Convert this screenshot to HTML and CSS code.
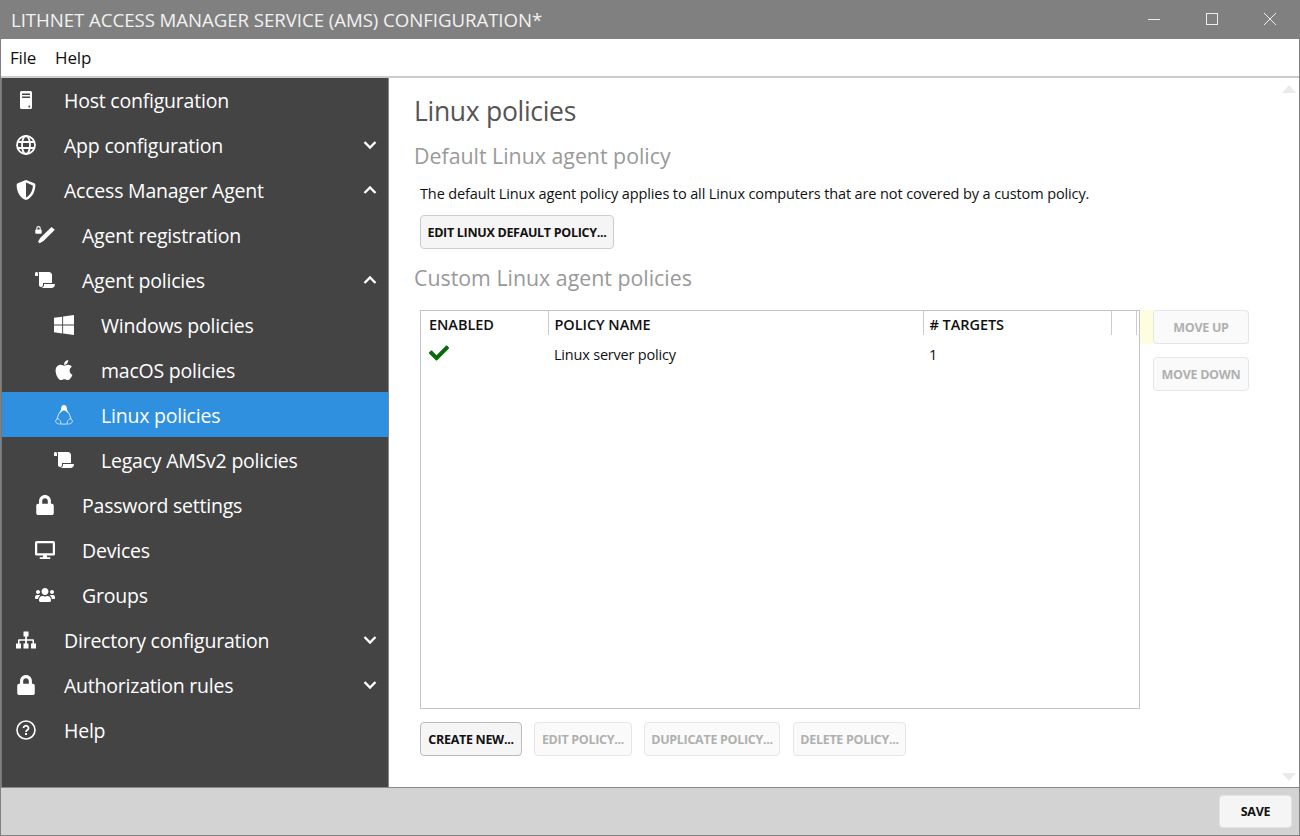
FILE: index.html
```html
<!DOCTYPE html>
<html lang="en">
<head>
    <meta charset="UTF-8">
    <title>Lithnet Access Manager Service (AMS) Configuration</title>
    <link rel="stylesheet" href="styles.css">
</head>
<body>
<div class="window">
    <div class="titlebar">
        <span class="title">LITHNET ACCESS MANAGER SERVICE (AMS) CONFIGURATION*</span>
        <div class="winbtns">
            <svg width="12" height="12" viewBox="0 0 12 12"><path d="M0 6.5h12" stroke="#eee" fill="none"/></svg>
            <svg width="12" height="12" viewBox="0 0 12 12"><rect x=".5" y=".5" width="11" height="11" stroke="#eee" fill="none"/></svg>
            <svg width="12" height="12" viewBox="0 0 12 12"><path d="M0 0l12 12M12 0L0 12" stroke="#eee" fill="none"/></svg>
        </div>
    </div>
    <div class="menubar">
        <span>File</span>
        <span>Help</span>
    </div>
    <div class="content">
        <nav class="sidebar">
            <div class="navitem">
                <svg class="icon" viewBox="0 0 20 20"><path fill="#fff" fill-rule="evenodd" d="M5.500 1h9a1.500 1.500 0 0 1 1.500 1.500v15a1.500 1.500 0 0 1-1.500 1.500h-9A1.500 1.500 0 0 1 4 17.500v-15A1.500 1.500 0 0 1 5.500 1zM6 3.500v1.500h8V3.500zm0 3v1.500h8V6.500zm6.500 9v2H14v-2z"/></svg>
                <span>Host configuration</span>
            </div>
            <div class="navitem">
                <svg class="icon" viewBox="0 0 20 20"><g fill="none" stroke="#fff" stroke-width="1.800"><circle cx="10" cy="10" r="9"/><ellipse cx="10" cy="10" rx="4" ry="9"/><path d="M1.500 7h17M1.500 13h17"/></g></svg>
                <span>App configuration</span>
                <svg class="chev" viewBox="0 0 14 10"><path d="M1.500 2l5.500 5.500L12.500 2"/></svg>
            </div>
            <div class="navitem">
                <svg class="icon" viewBox="0 0 512 512"><path fill="#fff" d="M466.500 83.700l-192-80a48.150 48.150 0 0 0-36.900 0l-192 80C27.700 91.100 16 108.600 16 128c0 198.500 114.500 335.700 221.500 380.300 11.800 4.900 25.100 4.900 36.900 0C360.100 472.600 496 349.300 496 128c0-19.400-11.700-36.900-29.500-44.300zM256.100 446.300l-.1-381 175.900 73.300c-3.300 151.400-82.100 261.100-175.800 307.700z"/></svg>
                <span>Access Manager Agent</span>
                <svg class="chev" viewBox="0 0 14 10"><path d="M1.500 8L7 2.500 12.500 8"/></svg>
            </div>
            <div class="navitem lvl2">
                <svg class="icon" viewBox="0 0 20 20"><path fill="#fff" d="M16.500 2l3.300 2.800L8.500 16l-4 2.300-1.500-1.500L5.200 13z"/><rect x=".3" y="4.500" width="6.400" height="4.300" rx=".8" fill="#fff"/><path d="M1.800 4.800V3.300a1.700 1.700 0 0 1 3.400 0v1.500" fill="none" stroke="#fff" stroke-width="1.100"/></svg>
                <span>Agent registration</span>
            </div>
            <div class="navitem lvl2">
                <svg class="icon" viewBox="0 0 640 512"><path fill="#fff" d="M48 0C21.530 0 0 21.530 0 48v64c0 8.840 7.160 16 16 16h80V48C96 21.530 74.470 0 48 0zm208 412.570V352h288V96c0-52.940-43.060-96-96-96H111.590C121.740 13.410 128 29.920 128 48v368c0 38.870 34.660 69.650 74.770 63.120C234.270 474 256 444.460 256 412.570zM288 384v32c0 52.930-43.060 96-96 96h336c61.860 0 112-50.140 112-112 0-8.840-7.160-16-16-16H288z"/></svg>
                <span>Agent policies</span>
                <svg class="chev" viewBox="0 0 14 10"><path d="M1.500 8L7 2.500 12.500 8"/></svg>
            </div>
            <div class="navitem lvl3">
                <svg class="icon" viewBox="0 32 448 448"><path fill="#fff" d="M0 93.700l183.600-25.300v177.400H0V93.700zm0 324.600l183.600 25.300V268.400H0v149.900zm203.800 28L448 480V268.400H203.800v177.900zm0-380.600v180.100H448V32L203.800 65.700z"/></svg>
                <span>Windows policies</span>
            </div>
            <div class="navitem lvl3">
                <svg class="icon" viewBox="0 32 384 448"><path fill="#fff" d="M318.700 268.700c-.2-36.700 16.400-64.400 50-84.800-18.800-26.900-47.200-41.700-84.700-44.600-35.500-2.800-74.300 20.700-88.500 20.700-15 0-49.400-19.700-76.400-19.700C63.300 141.200 4 184.800 4 273.500q0 39.300 14.400 81.200c12.800 36.700 59 126.700 107.200 125.200 25.200-.6 43-17.900 75.800-17.900 31.800 0 48.300 17.900 76.400 17.900 48.600-.7 90.400-82.500 102.600-119.300-65.200-30.700-61.700-90-61.700-91.900zm-56.600-164.200c27.300-32.400 24.800-61.900 24-72.500-24.100 1.400-52 16.400-67.900 34.900-17.500 19.800-27.800 44.300-25.600 71.900 26.100 2 49.900-11.400 69.500-34.300z"/></svg>
                <span>macOS policies</span>
            </div>
            <div class="navitem lvl3 selected">
                <svg class="icon" viewBox="0 0 20 20"><path fill="#fff" d="M10 0c1.900 0 2.800 1.400 2.800 3.200 0 1.500.8 2.700 1.800 4.300l-1 .4C12.500 6.500 11.700 5.500 10 5.500S7.500 6.500 6.400 7.900l-1-.4c1-1.600 1.800-2.800 1.800-4.300C7.200 1.400 8.100 0 10 0z"/><path fill="none" stroke="#fff" stroke-width=".8" d="M5.500 7.500C4.500 9.500 3.500 12 3 14M14.500 7.500c1 2 2 4.500 2.500 6.500M6.500 18.800c2.200.5 4.800.5 7 0"/><path fill="none" stroke="#fff" stroke-width=".7" d="M3 14c-1.500 1-1.800 2.800-.8 3.600 1.200.9 3 1.800 3.800 1.600.8-.2 1.200-1.800.5-3-.7-1.200-2-3-3.500-2.200zM17 14c1.500 1 1.800 2.800.8 3.600-1.200.9-3 1.800-3.800 1.600-.8-.2-1.200-1.800-.5-3 .7-1.200 2-3 3.500-2.200z"/></svg>
                <span>Linux policies</span>
            </div>
            <div class="navitem lvl3">
                <svg class="icon" viewBox="0 0 640 512"><path fill="#fff" d="M48 0C21.530 0 0 21.530 0 48v64c0 8.840 7.160 16 16 16h80V48C96 21.530 74.470 0 48 0zm208 412.570V352h288V96c0-52.940-43.060-96-96-96H111.590C121.740 13.410 128 29.920 128 48v368c0 38.870 34.660 69.650 74.770 63.120C234.270 474 256 444.460 256 412.570zM288 384v32c0 52.930-43.060 96-96 96h336c61.860 0 112-50.140 112-112 0-8.840-7.160-16-16-16H288z"/></svg>
                <span>Legacy AMSv2 policies</span>
            </div>
            <div class="navitem lvl2">
                <svg class="icon" viewBox="0 0 448 512"><path fill="#fff" d="M400 224h-24v-72C376 68.200 307.800 0 224 0S72 68.200 72 152v72H48c-26.500 0-48 21.500-48 48v192c0 26.500 21.500 48 48 48h352c26.500 0 48-21.500 48-48V272c0-26.500-21.500-48-48-48zm-104 0H152v-72c0-39.700 32.300-72 72-72s72 32.300 72 72v72z"/></svg>
                <span>Password settings</span>
            </div>
            <div class="navitem lvl2">
                <svg class="icon" viewBox="0 0 576 512"><path fill="#fff" d="M528 0H48C21.500 0 0 21.500 0 48v320c0 26.500 21.500 48 48 48h192l-16 48h-72c-13.300 0-24 10.700-24 24s10.700 24 24 24h272c13.300 0 24-10.700 24-24s-10.700-24-24-24h-72l-16-48h192c26.500 0 48-21.500 48-48V48c0-26.500-21.500-48-48-48zm-16 352H64V64h448v288z"/></svg>
                <span>Devices</span>
            </div>
            <div class="navitem lvl2">
                <svg class="icon" viewBox="0 0 640 512"><path fill="#fff" d="M96 224c35.300 0 64-28.700 64-64s-28.700-64-64-64-64 28.700-64 64 28.700 64 64 64zm448 0c35.300 0 64-28.700 64-64s-28.700-64-64-64-64 28.700-64 64 28.700 64 64 64zm32 32h-64c-17.600 0-33.500 7.100-45.100 18.600 40.300 22.100 68.900 62 75.100 109.400h66c17.700 0 32-14.300 32-32v-32c0-35.300-28.700-64-64-64zm-256 0c61.900 0 112-50.100 112-112S381.900 32 320 32 208 82.100 208 144s50.100 112 112 112zm76.800 32h-8.300c-20.800 10-43.900 16-68.500 16s-47.600-6-68.500-16h-8.300C179.600 288 128 339.600 128 403.200V432c0 26.500 21.500 48 48 48h288c26.500 0 48-21.500 48-48v-28.800c0-63.600-51.600-115.200-115.200-115.200zm-223.700-13.400C161.500 263.100 145.600 256 128 256H64c-35.300 0-64 28.700-64 64v32c0 17.700 14.300 32 32 32h65.900c6.300-47.400 34.900-87.300 75.200-109.400z"/></svg>
                <span>Groups</span>
            </div>
            <div class="navitem">
                <svg class="icon" viewBox="0 0 20 20"><path fill="#fff" d="M7.500 1.500h5v5h-1.600v2.700h6.300a.8.800 0 0 1 .8.800v3.500H20v5h-5v-5h1.500v-2.800h-5.600v2.800h1.600v5h-5v-5h1.600v-2.800H3.500v2.800H5v5H0v-5h2V10a.8.800 0 0 1 .8-.8h6.300V6.500H7.500z"/></svg>
                <span>Directory configuration</span>
                <svg class="chev" viewBox="0 0 14 10"><path d="M1.500 2l5.500 5.500L12.500 2"/></svg>
            </div>
            <div class="navitem">
                <svg class="icon" viewBox="0 0 448 512"><path fill="#fff" d="M400 224h-24v-72C376 68.200 307.800 0 224 0S72 68.200 72 152v72H48c-26.500 0-48 21.500-48 48v192c0 26.500 21.500 48 48 48h352c26.500 0 48-21.500 48-48V272c0-26.500-21.500-48-48-48zm-104 0H152v-72c0-39.700 32.300-72 72-72s72 32.300 72 72v72z"/></svg>
                <span>Authorization rules</span>
                <svg class="chev" viewBox="0 0 14 10"><path d="M1.500 2l5.500 5.500L12.500 2"/></svg>
            </div>
            <div class="navitem">
                <svg class="icon" viewBox="0 0 20 20"><circle cx="10" cy="10" r="9" fill="none" stroke="#fff" stroke-width="1.600"/><path fill="none" stroke="#fff" stroke-width="1.800" d="M7.500 8a2.500 2.300 0 1 1 3.800 2c-.9.600-1.300 1-1.300 2"/><rect x="9" y="13" width="2" height="2" fill="#fff"/></svg>
                <span>Help</span>
            </div>
        </nav>
        <main class="main">
            <div class="scrollup"></div>
            <div class="scrolldown"></div>
            <h1>Linux policies</h1>
            <h2 class="firsth2">Default Linux agent policy</h2>
            <p>The default Linux agent policy applies to all Linux computers that are not covered by a custom policy.</p>
            <button class="btn editdefault">EDIT LINUX DEFAULT POLICY...</button>
            <h2 class="secondh2">Custom Linux agent policies</h2>
            <div class="panel">
                <div class="listbox">
                    <table>
                        <tr>
                            <th class="col1">ENABLED</th>
                            <th class="col2">POLICY NAME</th>
                            <th class="col3"># TARGETS</th>
                            <th class="col4"></th>
                        </tr>
                        <tr>
                            <td><svg class="check" viewBox="0 0 512 512"><path fill="#0a6b0a" d="M173.898 439.404l-166.400-166.400c-9.997-9.997-9.997-26.206 0-36.204l36.203-36.204c9.997-9.998 26.207-9.998 36.204 0L192 312.690 432.095 72.596c9.997-9.997 26.207-9.997 36.204 0l36.203 36.204c9.997 9.997 9.997 26.206 0 36.204l-294.400 294.401c-9.998 9.997-26.207 9.997-36.204-.001z"/></svg></td>
                            <td>Linux server policy</td>
                            <td>1</td>
                            <td></td>
                        </tr>
                    </table>
                </div>
                <div class="sidebtns">
                    <div class="tint"><button class="btn disabled moveup">MOVE UP</button></div>
                    <button class="btn disabled movedown">MOVE DOWN</button>
                </div>
            </div>
            <div class="actions">
                <button class="btn create">CREATE NEW...</button>
                <button class="btn disabled editbtn">EDIT POLICY...</button>
                <button class="btn disabled dupbtn">DUPLICATE POLICY...</button>
                <button class="btn disabled delbtn">DELETE POLICY...</button>
            </div>
        </main>
    </div>
    <div class="footer">
        <button class="btn save">SAVE</button>
    </div>
</div>
</body>
</html>
```

FILE: styles.css
```css
* {
    box-sizing: border-box;
}
body {
    margin: 0;
    font-family: "Open Sans", "Noto Sans", sans-serif;
    background: #fff;
}
.window {
    width: 1300px;
    height: 836px;
    display: flex;
    flex-direction: column;
    border-left: 1px solid #808080;
    border-right: 1px solid #808080;
    border-bottom: 1px solid #808080;
    overflow: hidden;
}
.titlebar {
    height: 39px;
    background: #808080;
    color: #f2f2f2;
    display: flex;
    align-items: center;
    justify-content: space-between;
    padding-left: 10px;
    flex-shrink: 0;
}
.title {
    font-size: 18.670px;
    letter-spacing: -0.06px;
}
.winbtns {
    display: flex;
    gap: 46px;
    padding-right: 23px;
    margin-top: -1px;
}
.menubar {
    height: 39px;
    flex-shrink: 0;
    background: #fff;
    border-bottom: 2px solid #ccc;
    display: flex;
    align-items: center;
    gap: 19px;
    padding-left: 9px;
    font-size: 17px;
    letter-spacing: -0.2px;
    color: #111;
}
.content {
    flex: 1;
    display: flex;
    min-height: 0;
}
.sidebar {
    width: 388px;
    flex-shrink: 0;
    background: #444;
    border-left: 1px solid #777;
    border-right: 1px solid #888;
    color: #fff;
}
.navitem {
    height: 45px;
    display: flex;
    align-items: center;
    padding: 1px 11px 0 14px;
    font-size: 19.500px;
    letter-spacing: -0.22px;
}
.navitem:first-child {
    height: 44px;
    padding-top: 0;
}
.navitem span {
    flex: 1;
}
.lvl2 {
    padding-left: 33px;
}
.lvl3 {
    padding-left: 52px;
}
.selected {
    background: #3090e0;
}
.icon {
    width: 20px;
    height: 20px;
    margin-right: 28px;
    flex-shrink: 0;
}
.lvl2 .icon,
.lvl3 .icon {
    margin-right: 27px;
}
.chev {
    width: 14px;
    height: 10px;
    fill: none;
    stroke: #fff;
    stroke-width: 2.300;
}
.main {
    flex: 1;
    position: relative;
    background: #fff;
    padding: 16px 0 0 25px;
}
.scrollup,
.scrolldown {
    position: absolute;
    right: 3px;
    width: 0;
    height: 0;
    border-left: 7px solid transparent;
    border-right: 7px solid transparent;
}
.scrollup {
    top: 7px;
    border-bottom: 8px solid #eaeaea;
}
.scrolldown {
    bottom: 6px;
    border-top: 8px solid #eaeaea;
}
h1 {
    margin: 0;
    font-size: 26.500px;
    line-height: 34px;
    font-weight: 400;
    letter-spacing: -0.3px;
    color: #555;
}
h2 {
    margin: 0;
    font-size: 21.330px;
    line-height: 30px;
    font-weight: 400;
    color: #999;
}
.firsth2 {
    margin-top: 13px;
}
.secondh2 {
    margin-top: 14px;
}
p {
    margin: 13px 0 0 6px;
    font-size: 14.500px;
    line-height: 20px;
    letter-spacing: -0.115px;
    color: #111;
}
.btn {
    height: 34px;
    padding: 0;
    background: #f5f5f5;
    border: 1.500px solid #ccc;
    border-radius: 4px;
    font-family: "Open Sans", "Noto Sans", sans-serif;
    font-size: 12.500px;
    font-weight: 700;
    letter-spacing: -0.3px;
    color: #111;
    white-space: nowrap;
}
.disabled {
    background: #fafafa;
    border-color: #e6e6e6;
    color: #b0b0b0;
}
.editdefault {
    display: block;
    width: 194px;
    margin: 11px 0 0 6px;
}
.panel {
    display: flex;
    margin: 17px 0 0 6px;
}
.listbox {
    width: 720px;
    height: 399px;
    border: 1px solid #c4c4c4;
}
table {
    border-collapse: collapse;
    table-layout: fixed;
    width: 716px;
    font-size: 14.500px;
    letter-spacing: -0.2px;
    color: #111;
}
th {
    height: 24px;
    padding: 3px 0 0 6px;
    text-align: left;
    font-weight: 600;
    font-size: 14.500px;
    letter-spacing: -0.05px;
    border-right: 1px solid #ccc;
}
td {
    height: 36px;
    padding: 2px 0 0 6px;
}
.col1 {
    width: 127px;
    padding-left: 8px;
}
td:first-child {
    padding-left: 8px;
}
.col2 {
    width: 375px;
}
.col3 {
    width: 188px;
}
.check {
    width: 20px;
    height: 20px;
    display: block;
    margin-top: -2px;
}
.sidebtns {
    display: flex;
    flex-direction: column;
    gap: 13px;
}
.tint {
    width: 109px;
    padding-left: 13px;
    background: #fffde0;
}
.moveup,
.movedown {
    width: 96px;
}
.movedown {
    margin-left: 13px;
}
.actions {
    display: flex;
    gap: 12px;
    margin: 13px 0 0 6px;
}
.create {
    width: 102px;
    border-color: #bbb;
}
.editbtn {
    width: 98px;
}
.dupbtn {
    width: 136px;
}
.delbtn {
    width: 113px;
    margin-left: 1px;
}
.footer {
    height: 48px;
    flex-shrink: 0;
    background: #d3d3d3;
    border-top: 1px solid #888;
    display: flex;
    align-items: center;
    justify-content: flex-end;
    padding-right: 7px;
}
.save {
    width: 73px;
    height: 33px;
    border-color: #e4e4e4;
}
```
